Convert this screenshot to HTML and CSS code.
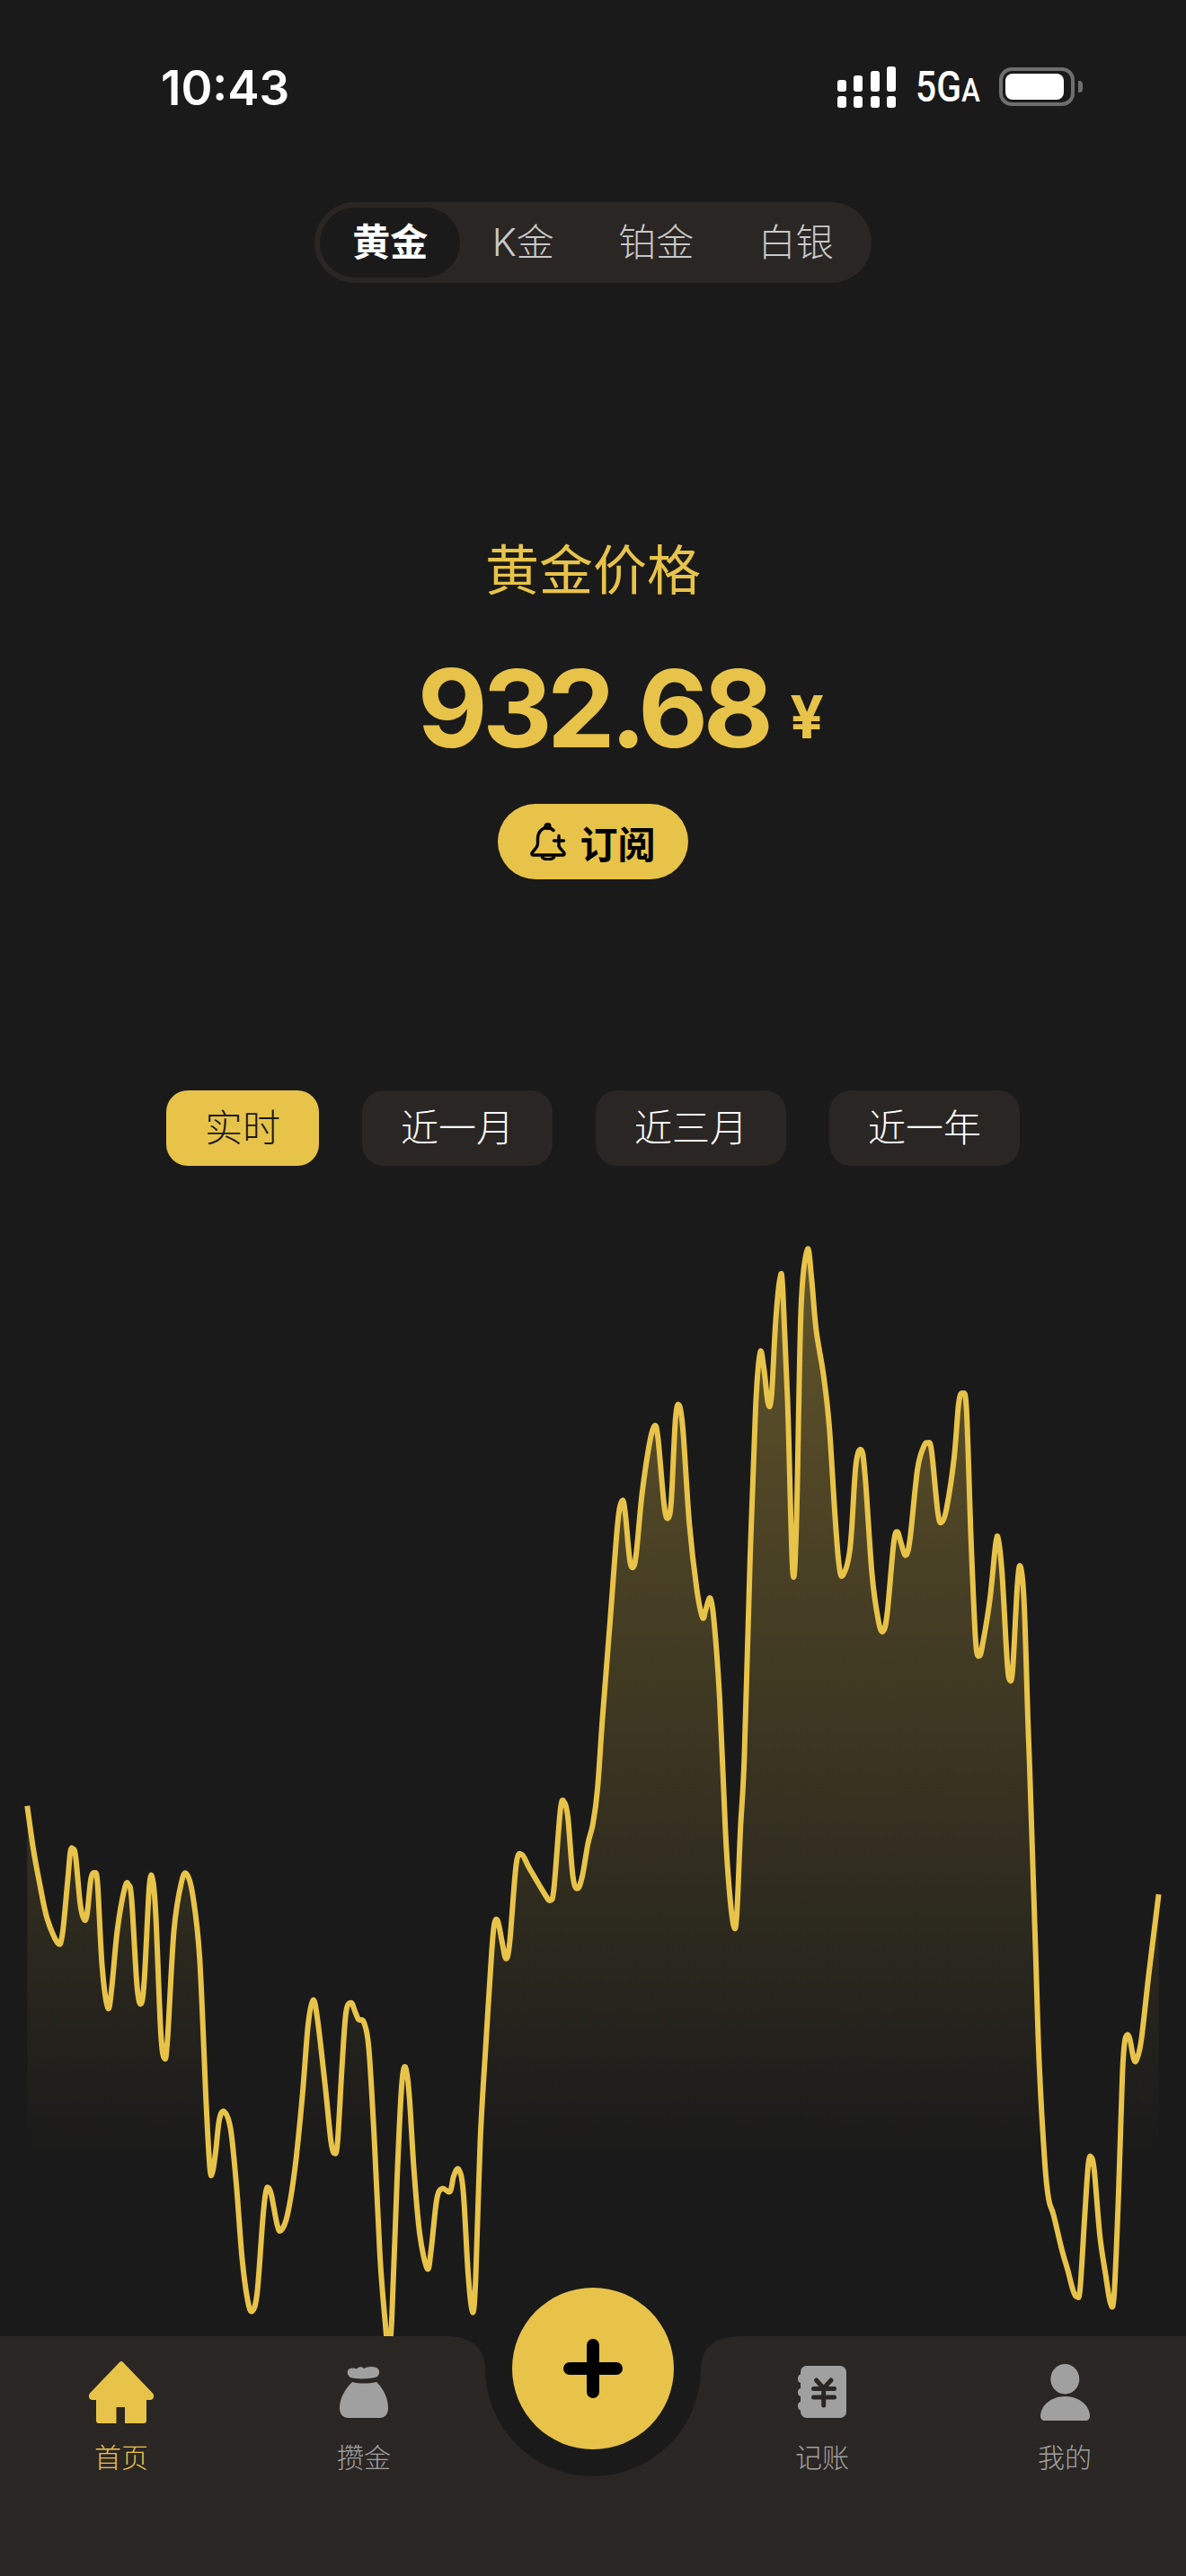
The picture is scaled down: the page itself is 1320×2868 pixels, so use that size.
FILE: index.html
```html
<!DOCTYPE html>
<html lang="zh-CN">

<head>
	<meta charset="utf-8">
	<title>黄金价格</title>
	<link rel="stylesheet" href="styles.css">
</head>

<body>
	<div class="status">
		<span class="time">10:43</span>
		<div class="status-icons">
			<svg class="signal" width="65" height="46" viewBox="0 0 65 46">
				<rect x="0" y="15" width="10" height="13" rx="3" />
				<rect x="18" y="10" width="10" height="18" rx="3" />
				<rect x="37" y="5" width="10" height="23" rx="3" />
				<rect x="55" y="0" width="10" height="28" rx="3" />
				<rect x="0" y="33" width="10" height="13" rx="3" />
				<rect x="18" y="33" width="10" height="13" rx="3" />
				<rect x="37" y="33" width="10" height="13" rx="3" />
				<rect x="55" y="33" width="10" height="13" rx="3" />
			</svg>
			<span class="network">5G<small>A</small></span>
			<div class="battery"><div class="battery-level"></div></div>
			<div class="battery-cap"></div>
		</div>
	</div>

	<div class="metals">
		<div class="metal active">黄金</div>
		<div class="metal">K金</div>
		<div class="metal">铂金</div>
		<div class="metal">白银</div>
	</div>

	<div class="hero">
		<div class="hero-title">黄金价格</div>
		<div class="price-row">
			<span class="price">932.68</span>
			<span class="yen">¥</span>
		</div>
		<button class="subscribe">
			<svg width="40" height="42" viewBox="0 0 40 42" fill="none" stroke="#000" stroke-width="3.4" stroke-linecap="round" stroke-linejoin="round">
				<circle cx="19.5" cy="4" r="2.4" />
				<path d="M26 8.5C24 6.5 22 5.5 19.5 5.5C12.5 5.5 8.5 11 8.5 18V23C8.5 27.5 5 29.5 2.5 33C1.2 35 2.2 36 4 36H36C37.8 36 38.8 35 37.5 33C35.5 30.5 33 28.5 32 26" />
				<path d="M26.5 20H37.5M32 14.5V25.5" />
				<path d="M13.5 38.5C16 41.5 24 41.5 26.5 38.5" />
			</svg>
			<span>订阅</span>
		</button>
	</div>

	<div class="ranges">
		<div class="range active">实时</div>
		<div class="range">近一月</div>
		<div class="range">近三月</div>
		<div class="range">近一年</div>
	</div>

	<svg id="chart" class="chart" viewBox="0 1370 1320 1231">
		<defs>
			<linearGradient id="chartFill" gradientUnits="userSpaceOnUse" x1="0" y1="1390" x2="0" y2="2400">
				<stop offset="0" stop-color="#e8c349" stop-opacity="0.35" />
				<stop offset="1" stop-color="#e8c349" stop-opacity="0" />
			</linearGradient>
		</defs>
		<path id="chartArea" fill="url(#chartFill)" />
		<path id="chartLine" fill="none" stroke="#e8c349" stroke-width="6" stroke-linejoin="round" />
	</svg>

	<nav class="nav">
		<svg class="nav-bg" width="1320" height="267" viewBox="0 0 1320 267">
			<path d="M0 0H497C525 0 540 14 540 36A120 120 0 0 0 780 36C780 14 795 0 823 0H1320V267H0Z" />
		</svg>
		<a class="nav-item active">
			<div class="nav-icon">
				<svg width="74" height="69" viewBox="0 0 74 69">
					<path d="M34.8 1.2a3 3 0 0 1 4.4 0L72 35.5c2.4 3 .8 7.5-3 7.5H65V66a3 3 0 0 1-3 3H41V51H31.5V69H12a3 3 0 0 1-3-3V43H5c-3.8 0-5.4-4.5-3-7.5Z" />
				</svg>
			</div>
			<span>首页</span>
		</a>
		<a class="nav-item">
			<div class="nav-icon">
				<svg width="54" height="58" viewBox="0 0 54 58">
					<path d="M10 4C12 2 16 2 19 3.5C21 .5 25 .5 27 3C30 1 36 0 41 2C45 4 45 9 42 12C36 15 18 15 12 13C8 10 8 6 10 4Z" />
					<path d="M14 18C22 20 32 20 41 18C49 26 54 36 54 47C54 54 50 58 45 58H10C4 58 0 54 0 47C0 36 6 26 14 18Z" />
				</svg>
			</div>
			<span>攒金</span>
		</a>
		<div class="nav-center">
			<button class="add">
				<svg width="66" height="66" viewBox="0 0 66 66">
					<path d="M7 33H59M33 7V59" fill="none" stroke="#000" stroke-width="14" stroke-linecap="round" />
				</svg>
			</button>
		</div>
		<a class="nav-item">
			<div class="nav-icon">
				<svg width="54" height="58" viewBox="0 0 54 58">
					<path d="M9 0H47A7 7 0 0 1 54 7V51A7 7 0 0 1 47 58H10A7 7 0 0 1 3 51V49.500C.5 49 0 46.500 0 44.500S.5 40.500 3 40V34C.5 33.500 0 31.500 0 29.500S.5 25.500 3 25V19C.5 18.500 0 16.500 0 14.500S.5 10 3 9.500V7A7 7 0 0 1 9 0Z" />
					<path d="M20.500 16L28.700 25L37 16M17.500 25.500H40.500M17.500 35H40.500M28.700 25V44" fill="none" stroke="#2a2624" stroke-width="5" stroke-linecap="round" stroke-linejoin="round" />
				</svg>
			</div>
			<span>记账</span>
		</a>
		<a class="nav-item">
			<div class="nav-icon">
				<svg width="55" height="63" viewBox="0 0 55 63">
					<ellipse cx="27.300" cy="16.700" rx="16" ry="16.700" />
					<path d="M27.500 36C44 36 55 47 55 58C55 61 53 63 50 63H5C2 63 0 61 0 58C0 47 11 36 27.500 36Z" />
				</svg>
			</div>
			<span>我的</span>
		</a>
	</nav>

	<script>
		const points = [
			[30.3, 2010.7], [37, 2058], [44.2, 2097.4], [52.6, 2136.5], [64.4, 2163.4], [69.4, 2153.8], [75, 2097.4], [78.3, 2061.9],
			[81.2, 2058.4], [84.2, 2067], [89.2, 2119], [93.4, 2136.5], [96.8, 2132], [101, 2093], [105.2, 2085.3], [108.6, 2097.4],
			[113.6, 2188.5], [120, 2235.3], [124.2, 2214.5], [130.5, 2149.5], [138.9, 2101.8], [143.1, 2098.3], [146.5, 2114.8],
			[152.4, 2210], [157, 2231], [160.8, 2201.5], [166.2, 2099.6], [170, 2093], [173.4, 2132], [178.9, 2262], [183, 2291.7],
			[186.4, 2271], [193.6, 2149.5], [202, 2095.3], [207.9, 2086.6], [214.6, 2110.4], [222.2, 2179.8], [229.4, 2340.3],
			[233.6, 2414], [236.5, 2418.3], [239.9, 2396.7], [244.1, 2359.8], [249.6, 2351], [256.7, 2370.6], [263, 2431.4],
			[269.4, 2513.7], [275.7, 2561.4], [280.7, 2573.2], [286.2, 2552.8], [292.5, 2470.4], [295.9, 2440], [298.8, 2435.7],
			[302.2, 2444.4], [308.5, 2476.9], [312.7, 2483.4], [319.9, 2466], [328.3, 2414], [336.7, 2331.6], [343, 2253.6],
			[348.5, 2226.7], [353.5, 2249.2], [362, 2323], [368.3, 2383.6], [372.5, 2397.5], [375.8, 2383.6], [380.9, 2297],
			[385.1, 2240.5], [390.6, 2229.7], [394.8, 2238.4], [399, 2248.3], [404.9, 2251.4], [410.4, 2279.6], [416.7, 2383.6],
			[423, 2513.7], [428.5, 2583], [432.2, 2613.5], [436, 2583], [441.9, 2427], [447, 2323], [451.2, 2301.3], [455.4, 2331.6],
			[460.9, 2418.3], [467.2, 2487.7], [475.6, 2525.9], [479.8, 2505], [486.1, 2448.7], [492.4, 2436.6], [500.8, 2440],
			[505, 2422.7], [510.5, 2415.3], [515.6, 2440], [521, 2531], [526, 2574.5], [529.5, 2535.4], [534.5, 2383.6],
			[540.8, 2275.2], [547.1, 2175.5], [550, 2143], [553.9, 2138.6], [558.9, 2162.5], [563.1, 2180.7], [567.3, 2162.5],
			[574.5, 2075.8], [580.8, 2065], [589.2, 2080], [606, 2108.3], [612.4, 2115.7], [616.6, 2101.8], [623.7, 2015],
			[627.9, 2006.4], [632.1, 2023.7], [637.6, 2088.8], [642.7, 2102.6], [648.1, 2088.8], [654.5, 2052], [660, 2030],
			[665, 1991.8], [670.5, 1913.7], [679, 1805.3], [687.4, 1696.9], [692.4, 1670.9], [695.8, 1683.9], [700.8, 1736],
			[705, 1744.6], [708.4, 1727.3], [714.7, 1662.2], [723.1, 1605.9], [728.6, 1587.2], [732.4, 1601.5], [739.1, 1675.2],
			[743.3, 1690.4], [747.1, 1670.9], [751.8, 1579.8], [756, 1564.7], [760.2, 1592.8], [767.3, 1696.9], [775.7, 1770.6],
			[782, 1801], [785.4, 1792.3], [790.5, 1779.3], [794.7, 1805.3], [801, 1892], [807.3, 2036.7], [811.5, 2101.8],
			[816.6, 2144.3], [820, 2132], [824.1, 2036.7], [828.4, 1957], [834.7, 1740.3], [841, 1566.8], [846, 1506], [850.2, 1523.5],
			[854.9, 1562.5], [858.7, 1553.8], [863.3, 1471.4], [868.3, 1422.4], [871.3, 1436.7], [876.8, 1566.8], [882.2, 1748],
			[886.4, 1697], [891.5, 1458.4], [898.6, 1391.2], [903.3, 1423.7], [908.3, 1480], [916.7, 1532.1], [923, 1588.5],
			[929.4, 1688.2], [933.6, 1740.3], [937.8, 1754.2], [946.2, 1723], [952.5, 1631.9], [958.8, 1614.5], [963, 1644.9],
			[970.6, 1753.3], [977.8, 1805.3], [982.8, 1816.2], [987.4, 1796.7], [994.6, 1718.6], [998.8, 1705.6], [1003, 1718.6],
			[1008, 1731.6], [1012.7, 1714.3], [1021.1, 1636.2], [1028.3, 1610.2], [1032.5, 1606.7], [1036.7, 1614.5], [1043.8, 1683.9],
			[1048, 1694.8], [1053.5, 1679.6], [1061.9, 1623.2], [1067, 1562.5], [1071.6, 1551.6], [1075.8, 1571.2], [1080.9, 1718.6],
			[1085.9, 1827], [1090.1, 1843.5], [1094.3, 1827], [1101.9, 1779.3], [1108.2, 1718.6], [1111.2, 1714.3], [1115.4, 1753.3],
			[1120.9, 1848.7], [1123.8, 1870.4], [1127.2, 1857.4], [1132.2, 1766.3], [1135.6, 1743.8], [1139.8, 1783.7], [1144, 1913.7],
			[1146.1, 1971.7], [1152.4, 2166.8], [1156.6, 2296.9], [1163, 2409.7], [1167.2, 2448.7], [1172.6, 2466], [1181.9, 2505],
			[1188.2, 2526.8], [1194.5, 2550.6], [1198.7, 2557], [1202.1, 2548.4], [1207.1, 2470.4], [1211.3, 2409.7], [1214.7, 2401.9],
			[1218.1, 2418.3], [1224, 2487.7], [1230.3, 2531], [1235.8, 2563.6], [1240, 2555], [1245, 2440], [1249.2, 2310],
			[1252.2, 2270.9], [1256.8, 2267.9], [1261.9, 2292.6], [1265.2, 2292.6], [1270.3, 2270.9], [1278.7, 2197.2], [1289.6, 2109.2]
		];

		function smoothPath(pts) {
			let d = `M${pts[0][0]} ${pts[0][1]}`;
			for (let i = 0; i < pts.length - 1; i++) {
				const p0 = pts[i - 1] || pts[i];
				const p1 = pts[i];
				const p2 = pts[i + 1];
				const p3 = pts[i + 2] || p2;
				const c1x = p1[0] + (p2[0] - p0[0]) / 6;
				const c1y = p1[1] + (p2[1] - p0[1]) / 6;
				const c2x = p2[0] - (p3[0] - p1[0]) / 6;
				const c2y = p2[1] - (p3[1] - p1[1]) / 6;
				d += `C${c1x.toFixed(1)} ${c1y.toFixed(1)} ${c2x.toFixed(1)} ${c2y.toFixed(1)} ${p2[0]} ${p2[1]}`;
			}
			return d;
		}

		const line = smoothPath(points);
		document.getElementById('chartLine').setAttribute('d', line);
		document.getElementById('chartArea').setAttribute('d', `${line}V2601H${points[0][0]}Z`);
	</script>
</body>

</html>
```

FILE: styles.css
```css
* {
	box-sizing: border-box;
	margin: 0;
	padding: 0;
}

body {
	width: 1320px;
	height: 2868px;
	overflow: hidden;
	background: #1a1a1a;
	color: #fff;
	font-family: Inter, "Noto Sans CJK SC", sans-serif;
	display: flex;
	flex-direction: column;
	align-items: center;
}

.status {
	width: 100%;
	height: 125px;
	padding: 66px 115px 0 179px;
	display: flex;
	justify-content: space-between;
	align-items: flex-start;
}

.time {
	font-size: 53px;
	line-height: 64px;
	font-weight: 600;
}

.status-icons {
	display: flex;
	align-items: flex-start;
	padding-top: 8px;
}

.signal {
	fill: #fff;
	margin-right: 22px;
}

.network {
	width: 72px;
	margin-right: 21px;
	font-family: Roboto, sans-serif;
	font-size: 48px;
	line-height: 46px;
	font-weight: 500;
	transform: scaleX(0.85);
	transform-origin: left;
	white-space: nowrap;
}

.network small {
	font-size: 37px;
}

.battery {
	width: 84px;
	height: 43px;
	padding: 3px;
	border: 4px solid #6e6e6e;
	border-radius: 14px;
	margin-top: 1px;
}

.battery-level {
	width: 65px;
	height: 100%;
	background: #fff;
	border-radius: 8px;
}

.battery-cap {
	width: 5px;
	height: 13px;
	margin: 16px 0 0 4px;
	background: #6e6e6e;
	border-radius: 0 4px 4px 0;
}

.metals {
	margin-top: 100px;
	height: 90px;
	padding: 6px;
	display: flex;
	background: #2a2624;
	border-radius: 45px;
}

.metal {
	padding: 0 35.75px;
	font-size: 42px;
	line-height: 78px;
	font-weight: 300;
	color: #c8c8c8;
	border-radius: 39px;
}

.metal.active {
	background: #1a1a1a;
	color: #fff;
	font-weight: 700;
}

.hero {
	margin-top: 278px;
	display: flex;
	flex-direction: column;
	align-items: center;
	color: #e8c349;
}

.hero-title {
	font-size: 60px;
	line-height: 84px;
}

.price-row {
	margin-top: 47px;
	display: flex;
	align-items: center;
}

.price {
	font-size: 120px;
	line-height: 130px;
	font-weight: 700;
	letter-spacing: -5.5px;
}

.yen {
	width: 36px;
	margin: 18px -60px 0 24px;
	font-size: 66px;
	line-height: 60px;
	font-weight: 700;
	text-align: center;
}

.subscribe {
	margin-top: 41px;
	width: 212px;
	height: 84px;
	border: none;
	border-radius: 42px;
	background: #e8c349;
	color: #000;
	font-family: inherit;
	font-size: 42px;
	font-weight: 700;
	display: flex;
	align-items: center;
	justify-content: center;
	gap: 15px;
}

.ranges {
	margin-top: 235px;
	display: flex;
	gap: 48px;
}

.range {
	padding: 0 43px;
	height: 84px;
	font-size: 42px;
	line-height: 84px;
	font-weight: 300;
	background: #2a2624;
	border-radius: 24px;
}

.range.active {
	background: #e8c349;
	color: #1a1a1a;
}

.chart {
	display: block;
	flex: none;
	margin-top: 72px;
	width: 1320px;
	height: 1231px;
}

.nav {
	position: relative;
	width: 1320px;
	height: 267px;
	flex: none;
	display: grid;
	grid-template-columns: 270px 270px 240px 270px 270px;
}

.nav-bg {
	position: absolute;
	top: 0;
	left: 0;
	fill: #2a2624;
}

.nav-item {
	position: relative;
	padding-top: 27px;
	display: flex;
	flex-direction: column;
	align-items: center;
	color: #a0a0a0;
	fill: #a0a0a0;
	font-size: 30px;
	line-height: 40px;
	font-weight: 300;
}

.nav-item.active {
	color: #e8c349;
	fill: #e8c349;
}

.nav-icon {
	height: 70px;
	margin-bottom: 18px;
	display: flex;
	align-items: center;
	justify-content: center;
}

.nav-center {
	position: relative;
	display: flex;
	justify-content: center;
}

.add {
	width: 180px;
	height: 180px;
	margin-top: -54px;
	border: none;
	border-radius: 50%;
	background: #e8c349;
	display: flex;
	align-items: center;
	justify-content: center;
}
```
